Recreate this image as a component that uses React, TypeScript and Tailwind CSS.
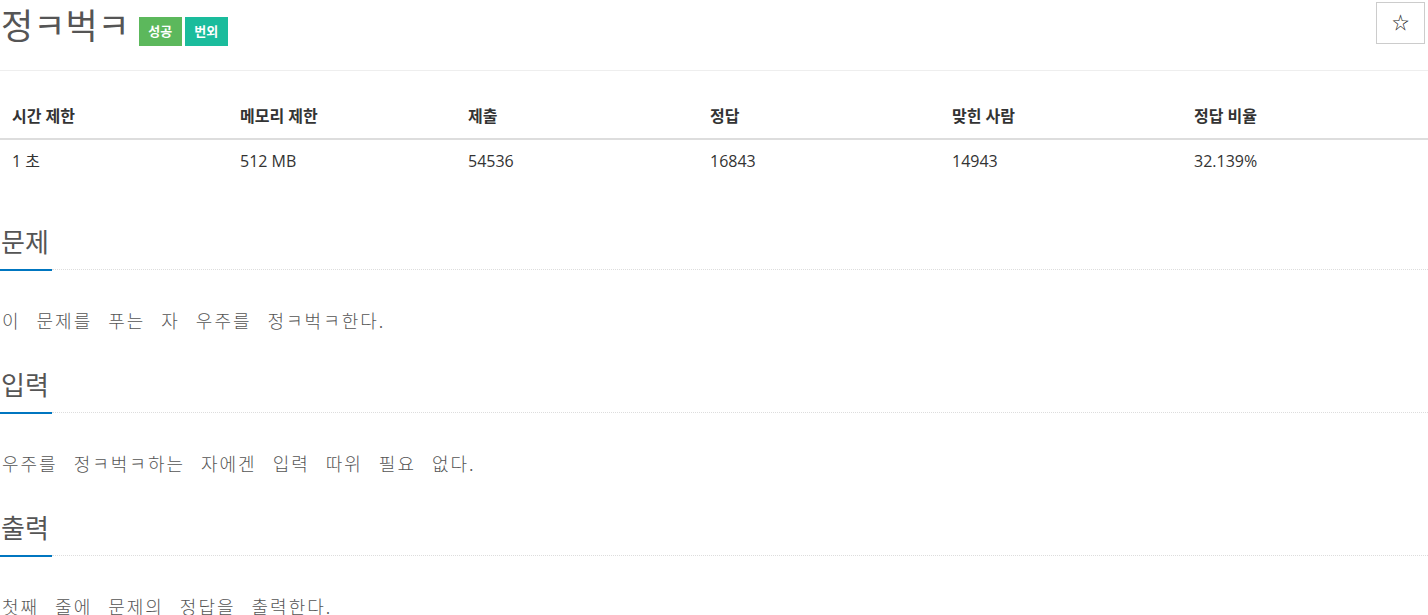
import React from "react";

const font = { fontFamily: '"Open Sans", "Noto Sans CJK KR", sans-serif' };

const heads = ["시간 제한", "메모리 제한", "제출", "정답", "맞힌 사람", "정답 비율"];
const vals = ["1 초", "512 MB", "54536", "16843", "14943", "32.139%"];
const widths = ["w-[228px]", "w-[228px]", "w-[242px]", "w-[242px]", "w-[242px]", ""];

function Section({ title, text, first }: { title: string; text: string; first?: boolean }) {
  return (
    <section className={first ? "mt-[47px]" : "mt-[34px]"}>
      <h2 className="text-[26px] leading-[30px] text-[#555] pl-[1px] pb-[13px]" style={{ fontFamily: '"Noto Sans CJK KR", sans-serif' }}>
        {title}
      </h2>
      <div className="flex items-start">
        <div className="w-[52px] h-[2px] bg-[#0076c0]" />
        <div className="flex-1 border-t border-dotted border-[#ddd]" />
      </div>
      <p
        className="mt-[34px] text-[18px] leading-[30px] text-[#555] pl-[2px] tracking-[2px] [word-spacing:10px]"
        style={{ fontFamily: '"Noto Sans CJK KR", sans-serif', fontWeight: 300 }}
      >
        {text}
      </p>
    </section>
  );
}

export default function App() {
  return (
    <main className="w-[1428px] bg-white text-[#333]" style={font}>
      <header className="flex items-start justify-between h-[71px] border-b border-[#eee]">
        <div className="flex items-start">
          <h1 className="mt-[4px] ml-[1px] text-[35px] leading-[40px] text-[#555]" style={{ fontFamily: '"Noto Sans CJK KR", sans-serif' }}>
            정ㅋ벅ㅋ
          </h1>
          <div className="flex gap-[3px] mt-[17px] ml-[9px]">
            <span className="w-[43px] h-[29px] flex items-center justify-center bg-[#5cb85c] text-white text-[13px] font-bold">성공</span>
            <span className="w-[43px] h-[29px] flex items-center justify-center bg-[#1abc9c] text-white text-[13px] font-bold">번외</span>
          </div>
        </div>
        <button className="mt-[2px] mr-[3px] w-[49px] h-[42px] border border-[#ccc] bg-white flex items-center justify-center text-[17px] text-[#222]">
          ☆
        </button>
      </header>

      <table className="mt-[28px] w-full border-collapse text-[16px]">
        <thead>
          <tr className="border-b-2 border-[#ddd]">
            {heads.map((h, i) => (
              <th key={h} className={`${widths[i]} pl-3 pt-[7px] pb-[12px] text-left font-bold leading-5`}>{h}</th>
            ))}
          </tr>
        </thead>
        <tbody>
          <tr>
            {vals.map((v, i) => (
              <td key={v} className={`${widths[i]} pl-3 pt-[11px] pb-[8px] leading-5`}>{v}</td>
            ))}
          </tr>
        </tbody>
      </table>

      <Section first title="문제" text="이 문제를 푸는 자 우주를 정ㅋ벅ㅋ한다." />
      <Section title="입력" text="우주를 정ㅋ벅ㅋ하는 자에겐 입력 따위 필요 없다." />
      <Section title="출력" text="첫째 줄에 문제의 정답을 출력한다." />
    </main>
  );
}
